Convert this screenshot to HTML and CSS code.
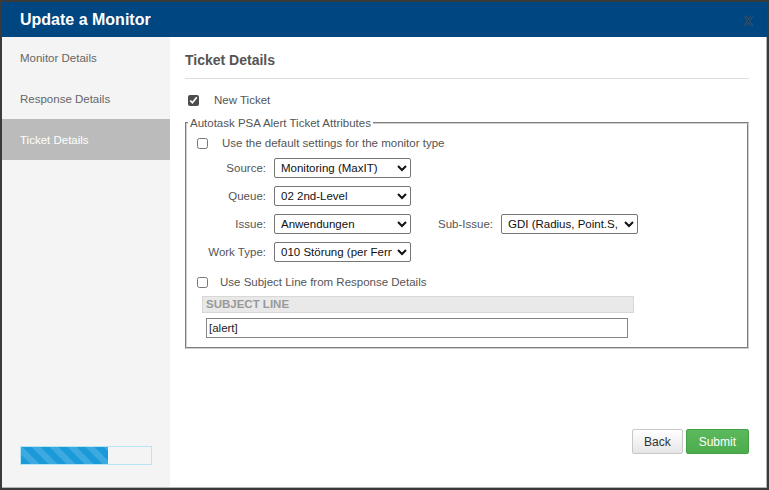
FILE: index.html
```html
<!DOCTYPE html>
<html>
<head>
<meta charset="utf-8">
<link rel="stylesheet" href="styles.css">
</head>
<body>
<div class="dialog">
  <header class="dlg-head">
    <h1>Update a Monitor</h1>
    <span class="close">X</span>
  </header>
  <div class="dlg-body">
    <nav class="side">
      <ul class="steps">
        <li>Monitor Details</li>
        <li>Response Details</li>
        <li class="active">Ticket Details</li>
      </ul>
      <div class="progress"><div class="bar" style="width:67%"></div></div>
    </nav>
    <main class="content">
      <h2>Ticket Details</h2>
      <label class="check-row new-ticket"><input type="checkbox" checked><span>New Ticket</span></label>
      <fieldset class="attrs">
        <legend>Autotask PSA Alert Ticket Attributes</legend>
        <label class="check-row default-row"><input type="checkbox"><span>Use the default settings for the monitor type</span></label>
        <div class="grid">
          <label class="lbl">Source:</label>
          <select class="sel"><option>Monitoring (MaxIT)</option></select>
          <label class="lbl">Queue:</label>
          <select class="sel"><option>02 2nd-Level</option></select>
          <label class="lbl">Issue:</label>
          <select class="sel"><option>Anwendungen</option></select>
          <label class="lbl sub-lbl">Sub-Issue:</label>
          <select class="sel sub-sel"><option>GDI (Radius, Point.S, Premio)</option></select>
          <label class="lbl">Work Type:</label>
          <select class="sel"><option>010 Störung (per Fernwartung)</option></select>
        </div>
        <label class="check-row subj-row"><input type="checkbox"><span>Use Subject Line from Response Details</span></label>
        <div class="subj-head">SUBJECT LINE</div>
        <input class="subj-input" type="text" value="[alert]">
      </fieldset>
      <div class="actions">
        <button class="btn back">Back</button>
        <button class="btn submit">Submit</button>
      </div>
    </main>
  </div>
</div>
</body>
</html>
```
FILE: styles.css
```css
html, body {
  margin: 0;
  padding: 0;
}
body {
  background: #3a3a3a;
  font-family: "Liberation Sans", Arial, sans-serif;
  font-size: 11.5px;
  color: #555;
  width: 769px;
  height: 490px;
  overflow: hidden;
}
.dialog {
  margin: 2px 0 0 2px;
  width: 765px;
  height: 486px;
  display: flex;
  flex-direction: column;
  background: #fff;
}
.dlg-head {
  height: 35px;
  flex: none;
  background: #004680;
  display: flex;
  align-items: center;
  justify-content: space-between;
  padding: 0 14px 0 18px;
}
.dlg-head h1 {
  margin: 0;
  font-size: 16px;
  font-weight: bold;
  color: #fff;
}
.close {
  font-size: 14px;
  color: #1e3247;
  margin-top: 3px;
  text-shadow: 0 0 1px #7d93aa;
}
.dlg-body {
  flex: 1;
  display: flex;
  min-height: 0;
  border-right: 1px solid #b5b5b5;
  border-bottom: 1px solid #b5b5b5;
}
.side {
  width: 168px;
  flex: none;
  background: #f4f4f4;
  display: flex;
  flex-direction: column;
}
.steps {
  list-style: none;
  margin: 0;
  padding: 0;
}
.steps li {
  height: 41px;
  line-height: 42px;
  padding-left: 18px;
  color: #666;
  font-size: 11.5px;
}
.steps li.active {
  background: #bbbbbb;
  color: #fff;
}
.progress {
  margin: auto 0 22px 18px;
  width: 132px;
  height: 19px;
  box-sizing: border-box;
  border: 1px solid #b6e5f4;
  background: #f4f4f4;
}
.bar {
  height: 100%;
  background: repeating-linear-gradient(45deg, #1a9ad9 0 6.4px, #3da9e1 6.4px 12.8px);
}
.content {
  flex: 1;
  display: flex;
  flex-direction: column;
  padding: 13px 17px 33px 15px;
  min-width: 0;
}
.content h2 {
  margin: 0;
  font-size: 14px;
  font-weight: bold;
  line-height: 20px;
  color: #555;
  padding-bottom: 8px;
  border-bottom: 1px solid #dddddd;
}
.check-row {
  display: flex;
  align-items: center;
  height: 18px;
  color: #555;
}
.check-row input {
  margin: 0;
  width: 11px;
  height: 11px;
  accent-color: #4d4d4d;
  flex: none;
}
.new-ticket {
  margin-top: 12px;
  padding-left: 3px;
}
.new-ticket input {
  margin-right: 15px;
}
.attrs {
  margin: 7px 0 0 0;
  padding: 4px 10px 9px 10px;
  border: 2px groove #d0d0d0;
  min-width: 0;
}
.attrs legend {
  font-size: 11.5px;
  line-height: 14px;
  padding: 0 2px;
  margin-left: -9px;
  color: #555;
}
.default-row input {
  margin-right: 14px;
}
.grid {
  margin-top: 6px;
  display: grid;
  grid-template-columns: 69px 137px 74px 137px;
  grid-auto-rows: 20px;
  column-gap: 8px;
  row-gap: 8px;
}
.lbl {
  grid-column: 1;
  text-align: right;
  line-height: 20px;
  color: #555;
  white-space: nowrap;
}
.sel {
  grid-column: 2;
  height: 20px;
  font-family: "Liberation Sans", Arial, sans-serif;
  font-size: 11.5px;
  color: #111;
  background: #fff;
  border: 1px solid #767676;
  border-radius: 2px;
  padding: 0 2px 0 2px;
  margin: 0;
  width: 137px;
}
.sub-lbl {
  grid-column: 3;
  grid-row: 3;
}
.sub-sel {
  grid-column: 4;
  grid-row: 3;
}
.subj-row {
  margin-top: 11px;
}
.subj-row input {
  margin-right: 12px;
}
.subj-head {
  margin: 5px 0 0 5px;
  width: 432px;
  height: 17px;
  box-sizing: border-box;
  background: #e9e9e9;
  border: 1px solid #d8d8d8;
  font-size: 11.5px;
  font-weight: bold;
  color: #999;
  line-height: 15px;
  padding-left: 3px;
}
.subj-input {
  display: block;
  margin: 5px 0 0 9px;
  width: 422px;
  height: 20px;
  box-sizing: border-box;
  border: 1px solid #858585;
  padding: 0 2px;
  font-family: "Liberation Sans", Arial, sans-serif;
  font-size: 11.5px;
  color: #222;
  outline: none;
}
.actions {
  margin-top: auto;
  display: flex;
  justify-content: flex-end;
  gap: 3px;
}
.btn {
  height: 25px;
  font-family: "Liberation Sans", Arial, sans-serif;
  font-size: 12px;
  border-radius: 2px;
  cursor: pointer;
  margin: 0;
}
.back {
  padding: 0 11px;
  background: linear-gradient(#ffffff, #e6e6e6);
  border: 1px solid #c8c8c8;
  color: #333;
}
.submit {
  padding: 0 12px;
  background: linear-gradient(#5cb85c, #4cac4c);
  border: 1px solid #45a145;
  color: #fff;
}
```
